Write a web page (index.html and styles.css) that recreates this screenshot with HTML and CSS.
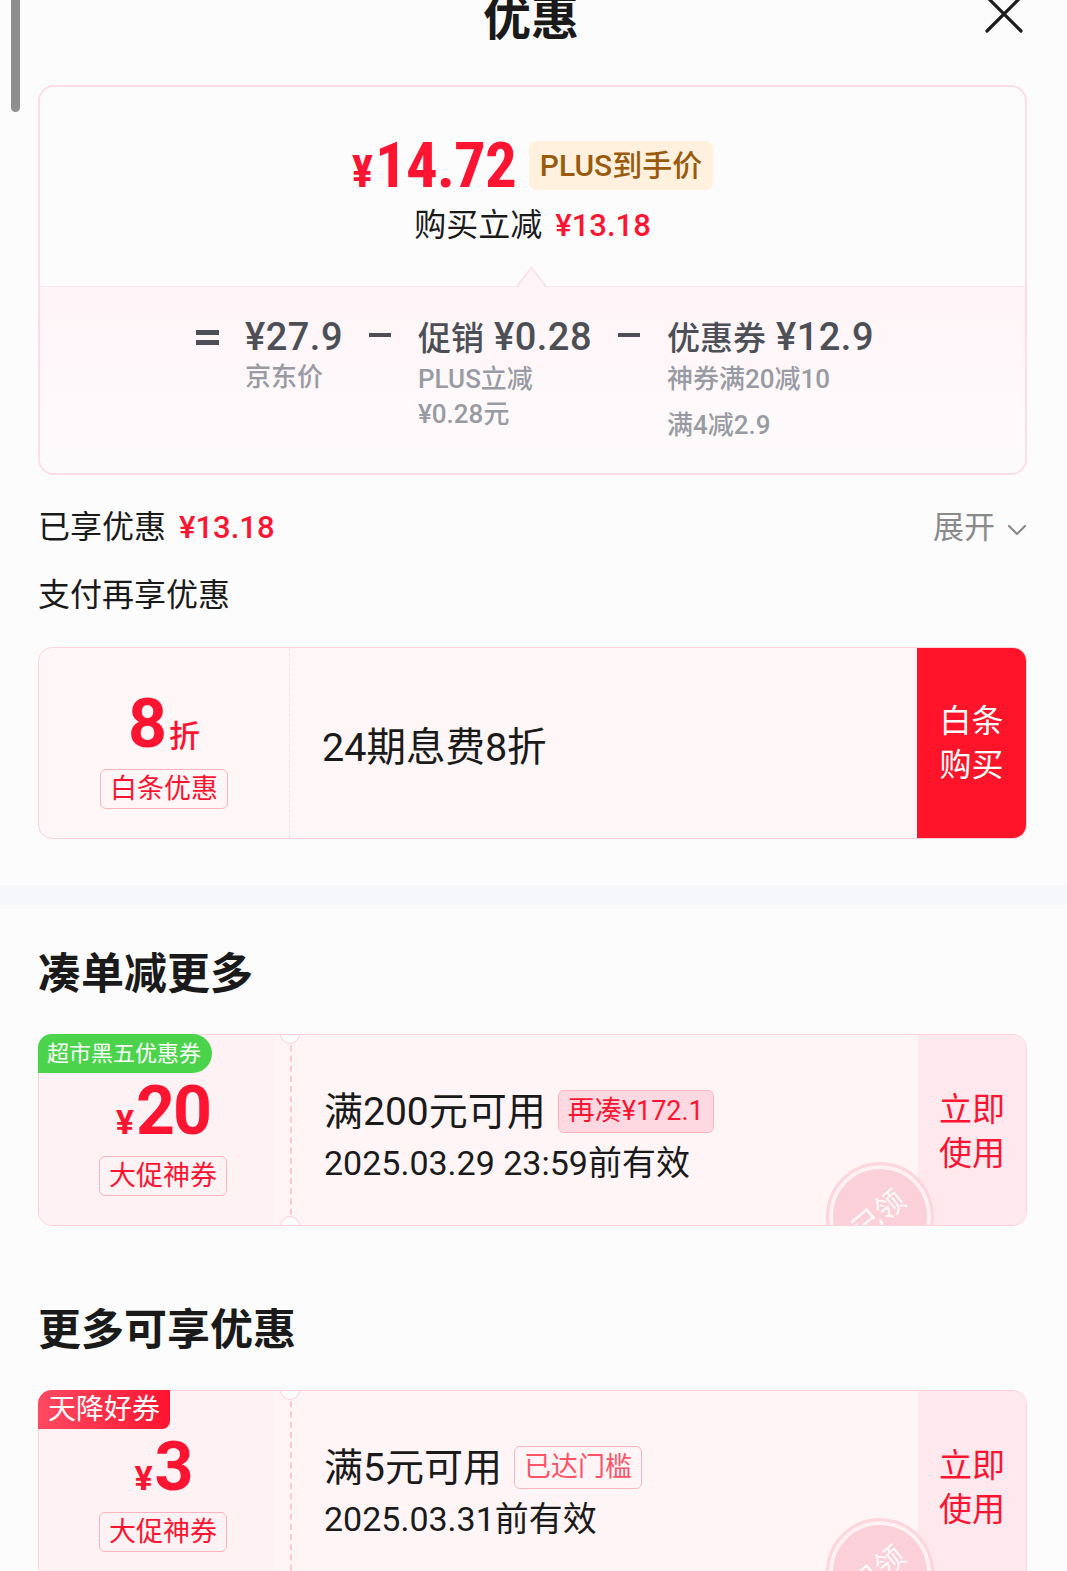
FILE: index.html
```html
<!DOCTYPE html>
<html lang="zh-CN">
<head>
<meta charset="utf-8">
<title>优惠</title>
<link rel="stylesheet" href="styles.css">
</head>
<body>
<div class="scrollbar"></div>
<header class="header">
  <span></span>
  <h1 class="title">优惠</h1>
  <svg class="close" viewBox="0 0 40 40" aria-label="关闭"><path d="M3 3L37 37M37 3L3 37" stroke="#1c1c1c" stroke-width="3.2" stroke-linecap="round" fill="none"/></svg>
</header>

<section class="wrap">
  <div class="price-card">
    <div class="price-top">
      <div class="price-row">
        <span class="price"><span class="yen">¥</span>14.72</span>
        <span class="plus-badge">PLUS到手价</span>
      </div>
      <div class="reduce">购买立减<span class="red-num">¥13.18</span></div>
    </div>
    <div class="price-bottom">
      <span class="op eq"></span>
      <div class="col">
        <div class="main">¥27.9</div>
        <div class="sub">京东价</div>
      </div>
      <span class="op minus"></span>
      <div class="col">
        <div class="main"><span class="cn">促销</span> ¥0.28</div>
        <div class="sub">PLUS立减</div>
        <div class="sub">¥0.28元</div>
      </div>
      <span class="op minus"></span>
      <div class="col">
        <div class="main"><span class="cn">优惠券</span> ¥12.9</div>
        <div class="sub">神券满20减10</div>
        <div class="sub spaced">满4减2.9</div>
      </div>
    </div>
  </div>

  <div class="summary">
    <div>已享优惠<span class="red-num">¥13.18</span></div>
    <div class="expand">展开<svg class="chev" viewBox="0 0 20 12"><path d="M2 2L10 10L18 2" stroke="#8a8a8a" stroke-width="2.2" fill="none" stroke-linecap="round" stroke-linejoin="round"/></svg></div>
  </div>
  <div class="pay-title">支付再享优惠</div>

  <div class="bt-card">
    <div class="bt-left">
      <div class="rate"><span class="rate-num">8</span><span class="rate-unit">折</span></div>
      <span class="badge">白条优惠</span>
    </div>
    <div class="bt-mid">24期息费8折</div>
    <div class="bt-btn">白条<br>购买</div>
  </div>
</section>

<div class="band"></div>

<section class="wrap">
  <h2 class="sec-title">凑单减更多</h2>
  <div class="coupon">
    <span class="cp-tag green">超市黑五优惠券</span>
    <div class="cp-left">
      <div class="amount"><span class="amt-yen">¥</span><span class="amt-num">20</span></div>
      <span class="badge">大促神券</span>
    </div>
    <div class="cp-strip"><span class="dash"></span></div>
    <div class="cp-main">
      <div class="cp-row1">满200元可用<span class="cp-hint filled">再凑¥172.1</span></div>
      <div class="cp-row2">2025.03.29 23:59前有效</div>
    </div>
    <div class="cp-right">立即<br>使用</div>
    <span class="notch top"></span>
    <span class="notch bottom"></span>
    <div class="stamp-clip"><div class="stamp"><span>已领</span></div></div>
  </div>

  <h2 class="sec-title second">更多可享优惠</h2>
  <div class="coupon">
    <span class="cp-tag red">天降好券</span>
    <div class="cp-left">
      <div class="amount"><span class="amt-yen">¥</span><span class="amt-num">3</span></div>
      <span class="badge">大促神券</span>
    </div>
    <div class="cp-strip"><span class="dash"></span></div>
    <div class="cp-main">
      <div class="cp-row1">满5元可用<span class="cp-hint outline">已达门槛</span></div>
      <div class="cp-row2">2025.03.31前有效</div>
    </div>
    <div class="cp-right">立即<br>使用</div>
    <span class="notch top"></span>
    <span class="notch bottom"></span>
    <div class="stamp-clip"><div class="stamp"><span>已领</span></div></div>
  </div>
</section>
</body>
</html>
```

FILE: styles.css
```css
html, body {
  overflow: hidden;
}
body {
  margin: 0;
  background: #fcfcfd;
  font-family: Roboto, "Noto Sans CJK SC", "Noto Sans", sans-serif;
  color: #1a1a1a;
}

.scrollbar {
  position: fixed;
  left: 11px;
  top: 0;
  width: 9px;
  height: 112px;
  background: #8e8e8e;
  border-radius: 0 0 5px 5px;
}

.header {
  display: grid;
  grid-template-columns: 1fr auto 1fr;
  align-items: center;
  height: 48px;
  margin-top: -10px;
  padding: 0 43px 0 38px;
}
.title {
  margin: 0;
  font-family: "Noto Sans CJK SC", sans-serif;
  font-size: 48px;
  font-weight: 700;
  line-height: 48px;
  color: #1a1a1a;
}
.close {
  justify-self: end;
  width: 40px;
  height: 40px;
}

.wrap {
  padding: 0 40px 0 38px;
}

/* price card */
.price-card {
  margin-top: 47px;
  border: 2px solid #ffdde6;
  border-radius: 16px;
  background: #fdfcfd;
  overflow: hidden;
}
.price-top {
  padding: 43px 0 40px;
  text-align: center;
}
.price-row {
  display: flex;
  justify-content: center;
  align-items: center;
  height: 70px;
}
.price {
  padding-top: 8px;
  color: #ff1532;
  font-family: "Liberation Sans Narrow", "Roboto Condensed", Roboto, sans-serif;
  font-weight: 700;
  font-size: 63px;
  line-height: 70px;
  letter-spacing: -1px;
}
.yen {
  font-size: 45px;
  margin-right: 3px;
}
.plus-badge {
  margin-left: 13px;
  height: 49px;
  line-height: 49px;
  padding: 0 11px;
  background: #fff1dd;
  color: #9a5a0e;
  border-radius: 7px;
  font-size: 30px;
  font-weight: 500;
}
.reduce {
  margin-top: 5px;
  font-size: 32px;
  line-height: 40px;
}
.red-num {
  color: #ff1532;
  margin-left: 13px;
  font-size: 31px;
  font-weight: 500;
}

.price-bottom {
  position: relative;
  border-top: 1px solid #ffe4ea;
  background: linear-gradient(#fff4f7, #fdfbfc);
  display: flex;
  justify-content: center;
  gap: 26px;
  padding: 28px 0 30px 5px;
}
.price-bottom::before,
.price-bottom::after {
  content: "";
  position: absolute;
  left: 50%;
  clip-path: polygon(50% 0, 100% 100%, 0 100%);
}
.price-bottom::before {
  top: -21px;
  width: 32px;
  height: 21px;
  margin-left: -17px;
  background: #ffe0e8;
}
.price-bottom::after {
  top: -18px;
  width: 27px;
  height: 18px;
  margin-left: -14.5px;
  background: #fff5f8;
}
.col .main {
  font-size: 38px;
  line-height: 44px;
  color: #4d4f57;
  font-weight: 500;
  letter-spacing: 0.5px;
  white-space: nowrap;
}
.col .main .cn {
  font-size: 33px;
  letter-spacing: 0;
}
.col .sub {
  font-size: 26px;
  line-height: 35px;
  color: #999ba3;
  font-weight: 500;
  white-space: nowrap;
}
.col .sub:nth-child(2) {
  margin-top: 1px;
}
.col .sub.spaced {
  margin-top: 11px;
}
.op {
  width: 23px;
  height: 44px;
  flex: none;
}
.op.eq {
  background:
    linear-gradient(#4d4f57, #4d4f57) 0 15px / 23px 5px no-repeat,
    linear-gradient(#4d4f57, #4d4f57) 0 25px / 23px 5px no-repeat;
}
.op.minus {
  background: linear-gradient(#4d4f57, #4d4f57) 0 18px / 22px 4px no-repeat;
}

/* summary */
.summary {
  margin-top: 30px;
  display: flex;
  justify-content: space-between;
  align-items: center;
  font-size: 32px;
  line-height: 44px;
}
.expand {
  display: flex;
  align-items: center;
  font-size: 31px;
  color: #8a8a8a;
}
.chev {
  width: 20px;
  height: 12px;
  margin-left: 12px;
  margin-top: 4px;
}
.pay-title {
  margin-top: 23px;
  font-size: 32px;
  line-height: 44px;
}

/* baitiao */
.bt-card {
  margin-top: 30px;
  height: 190px;
  border: 1px solid #ffd4dd;
  border-radius: 14px;
  background: #fff6f7;
  display: grid;
  grid-template-columns: 251px 1fr 109px;
  overflow: hidden;
}
.bt-left {
  display: flex;
  flex-direction: column;
  align-items: center;
  justify-content: center;
  gap: 1px;
  padding-top: 15px;
  border-right: 1px dashed #ffdfe6;
}
.rate {
  font-size: 68px;
  line-height: 62px;
  color: #ff1532;
}
.rate-num {
  font-weight: 700;
}
.rate-unit {
  font-size: 31px;
  font-weight: 500;
  margin-left: 2px;
}
.badge {
  box-sizing: border-box;
  height: 40px;
  line-height: 38px;
  padding: 0 9px;
  border: 1px solid #ffb3c2;
  border-radius: 6px;
  color: #ff1532;
  font-size: 27px;
}
.bt-mid {
  display: flex;
  align-items: center;
  padding-left: 32px;
  font-size: 39.5px;
}
.bt-btn {
  background: #ff1429;
  color: #fff;
  font-size: 32px;
  line-height: 44px;
  display: flex;
  align-items: center;
  justify-content: center;
  text-align: center;
}

.band {
  height: 20px;
  margin-top: 46px;
  background: #f6f7fb;
}

/* coupons */
.sec-title {
  margin: 37px 0 0;
  font-family: "Noto Sans CJK SC", sans-serif;
  font-size: 43px;
  font-weight: 700;
  line-height: 56px;
  color: #1a1a1a;
}
.sec-title.second {
  margin-top: 72px;
}
.coupon {
  position: relative;
  margin-top: 36px;
  height: 190px;
  border: 1px solid #ffd2dc;
  border-radius: 14px;
  background: #fff5f7;
  display: grid;
  grid-template-columns: 236px 32px 1fr 108px;
}
.cp-tag {
  position: absolute;
  top: -1px;
  left: -1px;
  z-index: 2;
  height: 39px;
  line-height: 39px;
  color: #fff;
}
.cp-tag.green {
  padding: 0 11px 0 9px;
  font-size: 22px;
  background: #4bd44b;
  border-radius: 14px 20px 20px 0;
}
.cp-tag.red {
  padding: 0 10px;
  font-size: 28px;
  background: linear-gradient(90deg, #ff4a62, #ff1530);
  border-radius: 14px 0 8px 0;
}
.cp-left {
  background: #fff2f5;
  border-radius: 13px 0 0 13px;
  display: flex;
  flex-direction: column;
  align-items: center;
  justify-content: center;
  gap: 3px;
  padding: 15px 0 0 12px;
}
.amount {
  font-size: 68px;
  line-height: 62px;
  color: #ff1532;
  font-weight: 700;
}
.amt-yen {
  font-size: 34px;
  margin-right: 2px;
}
.amt-num {
  letter-spacing: -2px;
}
.cp-strip {
  background: #fff4f6;
  display: flex;
  justify-content: center;
}
.dash {
  border-left: 2px dashed #ffc8d3;
}
.cp-main {
  display: flex;
  flex-direction: column;
  justify-content: center;
  gap: 1px;
  padding: 14px 0 0 17px;
}
.cp-row1 {
  display: flex;
  align-items: center;
  font-size: 39px;
  line-height: 50px;
  white-space: nowrap;
}
.cp-row2 {
  font-size: 34px;
  line-height: 50px;
  white-space: nowrap;
}
.cp-hint {
  box-sizing: border-box;
  margin-left: 12px;
  height: 43px;
  line-height: 41px;
  padding: 0 9px;
  border: 1px solid #ffb4c4;
  border-radius: 6px;
  font-size: 27px;
}
.cp-hint.filled {
  background: #ffd9e2;
  color: #ff1532;
}
.cp-hint.outline {
  color: #ff5468;
}
.cp-right {
  background: #ffe9ef;
  border-radius: 0 13px 13px 0;
  color: #ff1532;
  font-size: 33px;
  line-height: 44px;
  padding-top: 4px;
  display: flex;
  align-items: center;
  justify-content: center;
  text-align: center;
}
.notch {
  position: absolute;
  left: 241px;
  width: 20px;
  height: 20px;
  box-sizing: border-box;
  border-radius: 50%;
  background: #fcfcfd;
  border: 1px solid #ffd2dc;
  z-index: 2;
}
.notch.top {
  top: -11px;
  clip-path: inset(11px 0 0 0);
}
.notch.bottom {
  bottom: -11px;
  clip-path: inset(0 0 11px 0);
}
.stamp-clip {
  position: absolute;
  inset: 0;
  border-radius: 13px;
  overflow: hidden;
  pointer-events: none;
  z-index: 1;
}
.stamp {
  position: absolute;
  left: 787px;
  top: 127px;
  width: 108px;
  height: 108px;
  box-sizing: border-box;
  border-radius: 50%;
  border: 3px solid #ffd6de;
  background: #fbd0d9;
  box-shadow: inset 0 0 0 4px #fff1f4;
  display: flex;
  align-items: center;
  justify-content: center;
  transform: rotate(-40deg);
}
.stamp span {
  color: rgba(255, 255, 255, 0.92);
  font-size: 29px;
  margin-bottom: 10px;
}
```
